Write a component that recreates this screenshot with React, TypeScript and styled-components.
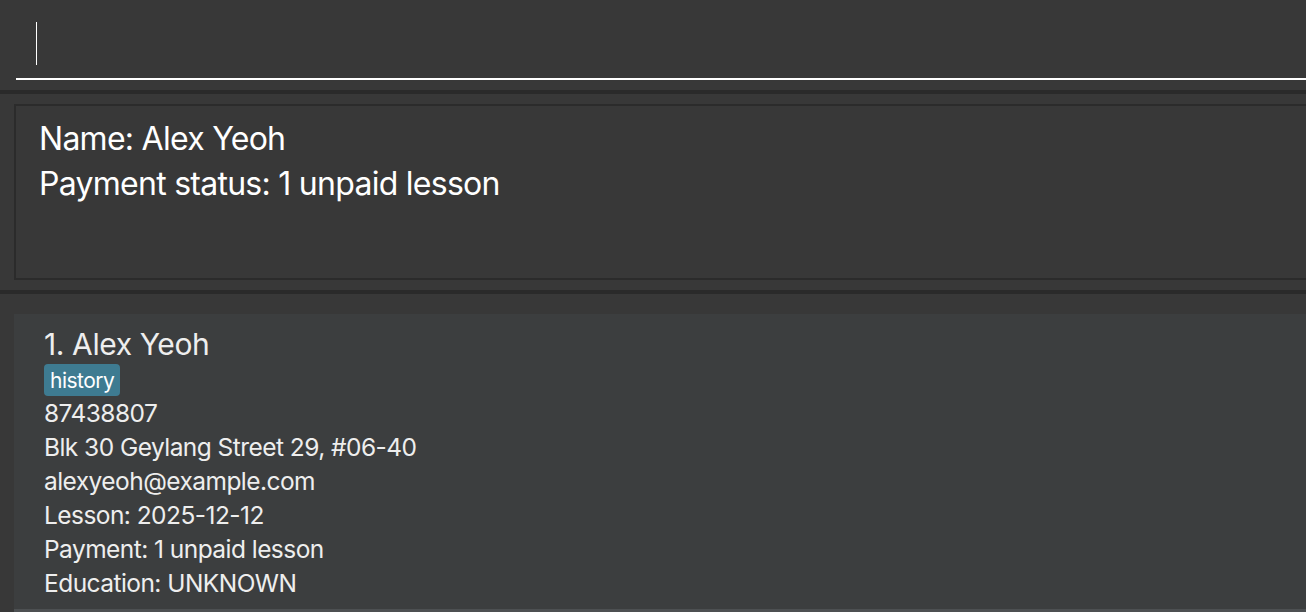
import React from "react";
import styled, { createGlobalStyle } from "styled-components";

const GlobalStyle = createGlobalStyle`
  html, body {
    margin: 0;
    padding: 0;
    background: #383838;
    overflow: hidden;
  }
  body {
    font-family: Inter, "Noto Sans", "Liberation Sans", sans-serif;
    -webkit-font-smoothing: antialiased;
  }
  * { box-sizing: border-box; }
`;

const Window = styled.div`
  width: 1306px;
  height: 612px;
  display: flex;
  flex-direction: column;
  background: #383838;
  overflow: hidden;
`;

const CommandArea = styled.div`
  height: 90px;
  padding: 0 0 10px 16px;
  display: flex;
  align-items: flex-end;
`;

const CommandField = styled.div`
  flex: 1;
  height: 70px;
  border-bottom: 2px solid #ffffff;
  padding: 12px 0 0 20px;
  display: flex;
  align-items: flex-start;
`;

const Caret = styled.span`
  display: block;
  width: 1px;
  height: 43px;
  background: #ffffff;
`;

const Separator = styled.div`
  height: 4px;
  flex-shrink: 0;
  background: #2a2a2a;
`;

const ResultPane = styled.div`
  height: 196px;
  padding: 10px 0 10px 14px;
  display: flex;
`;

const ResultBox = styled.div`
  flex: 1;
  border: 2px solid #2b2b2b;
  border-right: none;
  padding: 10px 0 0 23px;
  color: #ffffff;
  font-size: 32px;
  line-height: 45px;
  letter-spacing: -0.73px;
`;

const ResultLine = styled.div`
  white-space: nowrap;
`;

const ListArea = styled.div`
  flex: 1;
  padding: 20px 0 0 14px;
  display: flex;
  flex-direction: column;
  overflow: hidden;
`;

const PersonCell = styled.div`
  background: #3c3e3f;
  border-bottom: 3px solid #4d5052;
  padding: 12px 0 9px 30px;
  display: flex;
  flex-direction: column;
  align-items: flex-start;
  color: #eeeeee;
`;

const NameLabel = styled.div`
  font-size: 30px;
  line-height: 36px;
  letter-spacing: -0.4px;
  white-space: nowrap;
`;

const Tags = styled.div`
  display: flex;
  gap: 6px;
  margin-top: 2px;
`;

const Tag = styled.span`
  background: #3e7b91;
  color: #ffffff;
  border-radius: 4px;
  padding: 0 6px;
  height: 32px;
  display: flex;
  align-items: center;
  font-size: 21px;
  letter-spacing: -0.5px;
`;

const InfoLine = styled.div`
  font-size: 24.5px;
  line-height: 34px;
  letter-spacing: -0.55px;
  white-space: nowrap;
`;

type Person = {
  index: number;
  name: string;
  tags: string[];
  phone: string;
  address: string;
  email: string;
  lesson: string;
  payment: string;
  education: string;
};

const people: Person[] = [
  {
    index: 1,
    name: "Alex Yeoh",
    tags: ["history"],
    phone: "87438807",
    address: "Blk 30 Geylang Street 29, #06-40",
    email: "alexyeoh@example.com",
    lesson: "2025-12-12",
    payment: "1 unpaid lesson",
    education: "UNKNOWN",
  },
];

export default function App() {
  return (
    <>
      <GlobalStyle />
      <Window>
        <CommandArea>
          <CommandField>
            <Caret />
          </CommandField>
        </CommandArea>
        <Separator />
        <ResultPane>
          <ResultBox>
            <ResultLine>Name: Alex Yeoh</ResultLine>
            <ResultLine>Payment status: 1 unpaid lesson</ResultLine>
          </ResultBox>
        </ResultPane>
        <Separator />
        <ListArea>
          {people.map((p) => (
            <PersonCell key={p.index}>
              <NameLabel>
                {p.index}. {p.name}
              </NameLabel>
              <Tags>
                {p.tags.map((t) => (
                  <Tag key={t}>{t}</Tag>
                ))}
              </Tags>
              <InfoLine>{p.phone}</InfoLine>
              <InfoLine>{p.address}</InfoLine>
              <InfoLine>{p.email}</InfoLine>
              <InfoLine>Lesson: {p.lesson}</InfoLine>
              <InfoLine>Payment: {p.payment}</InfoLine>
              <InfoLine>Education: {p.education}</InfoLine>
            </PersonCell>
          ))}
        </ListArea>
      </Window>
    </>
  );
}
